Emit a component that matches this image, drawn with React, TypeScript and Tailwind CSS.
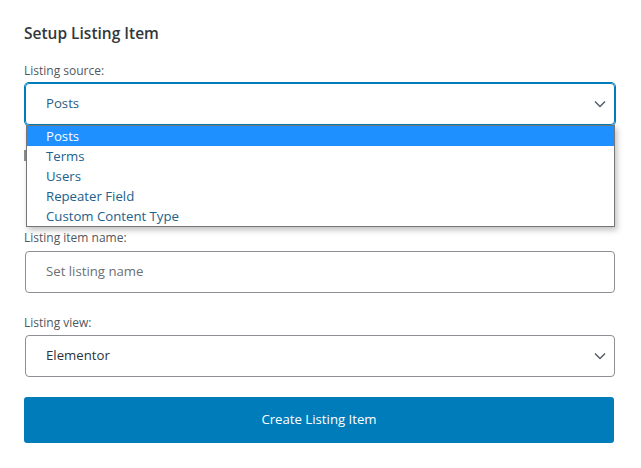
import React from "react";

function Chevron() {
  return (
    <svg width="12" height="8" viewBox="0 0 12 8" className="text-[#555d66]">
      <polyline points="1,1.5 6,6.5 11,1.5" fill="none" stroke="currentColor" strokeWidth="1.5" />
    </svg>
  );
}

const sourceOptions = ["Posts", "Terms", "Users", "Repeater Field", "Custom Content Type"];

export default function App() {
  return (
    <div
      className="min-h-[468px] w-[641px] bg-white pl-6 pt-[23px]"
      style={{ fontFamily: '"Open Sans", "Noto Sans", sans-serif' }}
    >
      <div className="w-[591px]">
        <h2 className="text-[15.5px] leading-5 font-semibold text-[#32373c]">Setup Listing Item</h2>

        {/* Listing source */}
        <div className="relative mt-[19px]">
          <label className="block text-[12px] leading-[18px] text-[#50575e]">Listing source:</label>
          <div className="mt-[3px] ml-px flex h-[42px] items-center justify-between rounded-[4px] border border-[#007cba] pl-5 pr-2 shadow-[0_0_0_1px_#007cba]">
            <span className="text-[13.2px] text-[#2c5d80]">Posts</span>
            <Chevron />
          </div>

          {/* bit of the field under the open list */}
          <div className="absolute left-0 top-[88px] h-[11px] w-[2px] bg-[#8a8f94]" />

          {/* open options list */}
          <ul className="absolute left-[2px] top-[63px] z-10 w-[589px] border border-[#767676] bg-white shadow-[2px_3px_6px_rgba(0,0,0,0.25)]">
            {sourceOptions.map((opt, i) => (
              <li
                key={opt}
                className={
                  i === 0
                    ? "h-5 bg-[#1e90ff] pl-[19px] text-[13.2px] leading-5 text-white"
                    : "h-5 pl-[19px] text-[13.2px] leading-5 text-[#21618c]"
                }
              >
                {opt}
              </li>
            ))}
          </ul>
        </div>

        {/* Listing item name */}
        <div className="mt-[104px]">
          <label className="block text-[12px] leading-[18px] text-[#50575e]">Listing item name:</label>
          <div className="mt-[4px] ml-px flex h-[42px] items-center rounded-[4px] border border-[#8c8f94] px-5">
            <span className="text-[13.2px] text-[#6b7075]">Set listing name</span>
          </div>
        </div>

        {/* Listing view */}
        <div className="mt-[21px]">
          <label className="block text-[12px] leading-[18px] text-[#50575e]">Listing view:</label>
          <div className="mt-[3px] ml-px flex h-[42px] items-center justify-between rounded-[4px] border border-[#8c8f94] pl-5 pr-2">
            <span className="text-[13.2px] text-[#2c3338]">Elementor</span>
            <Chevron />
          </div>
        </div>

        <button className="mt-[20px] flex h-[46px] w-[590px] items-center justify-center rounded-[3px] bg-[#007cba] text-[13.2px] text-white">
          Create Listing Item
        </button>
      </div>
    </div>
  );
}
